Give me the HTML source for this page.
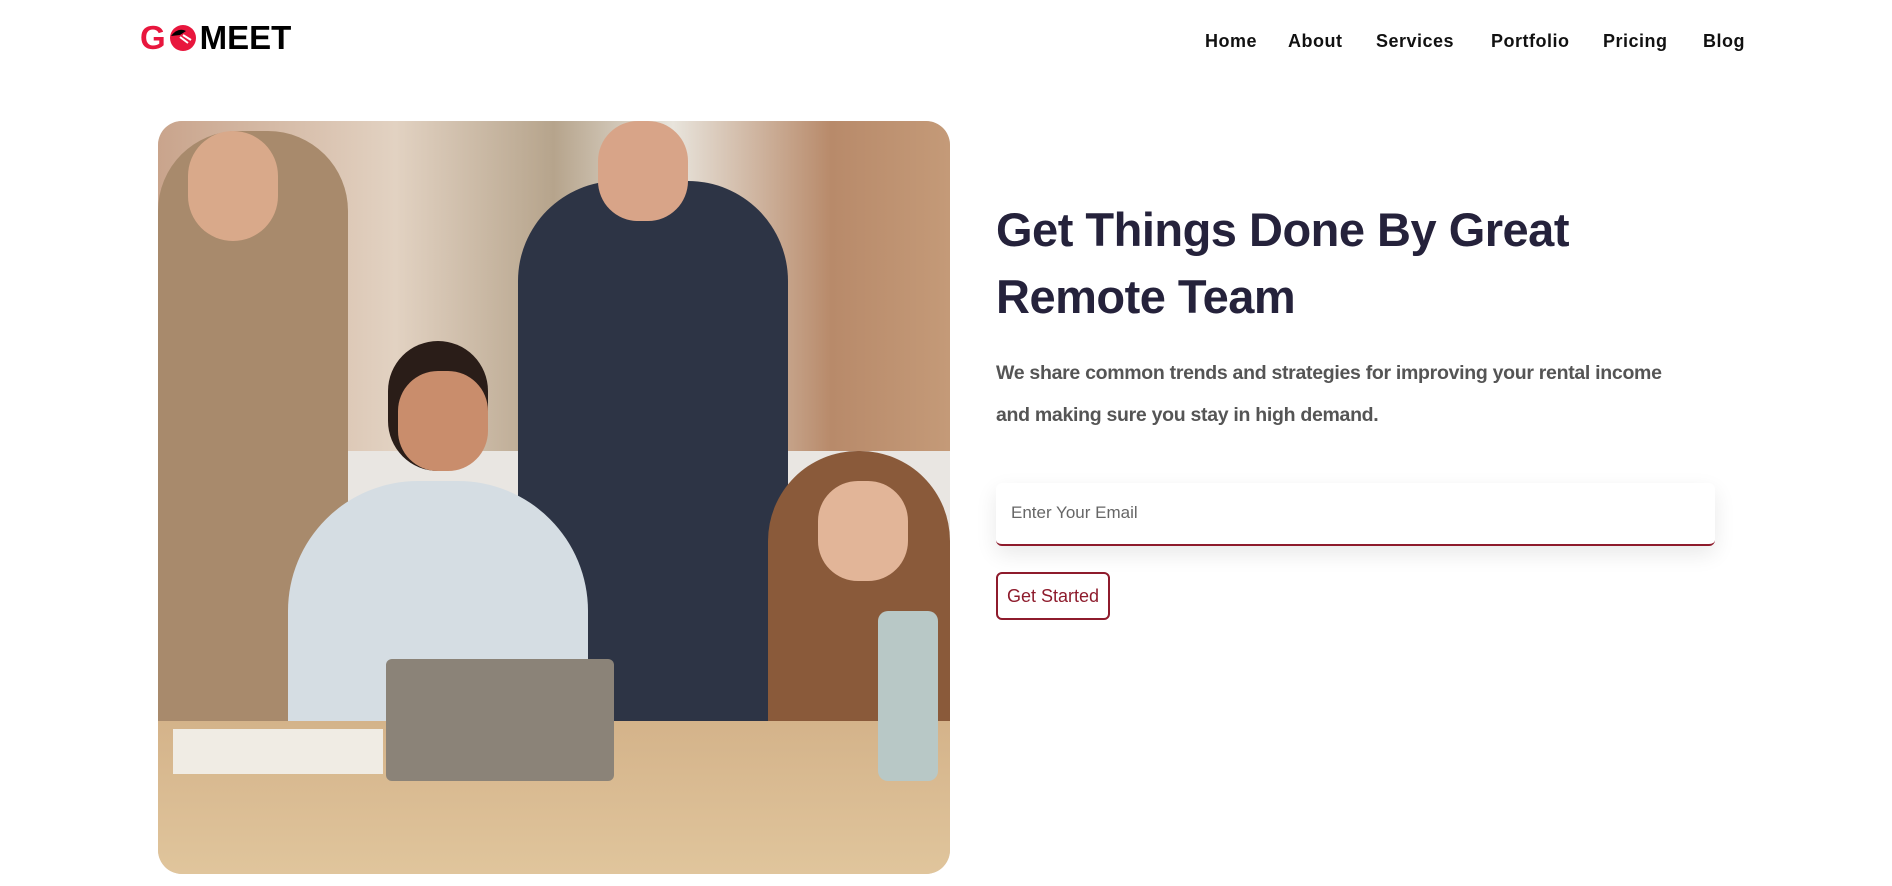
<!DOCTYPE html>
<html><head><meta charset="utf-8"><style>
*{margin:0;padding:0;box-sizing:border-box}
body{width:1892px;height:886px;background:#fff;position:relative;overflow:hidden;font-family:"Liberation Sans",sans-serif}
.logo{position:absolute;left:140px;top:23px;height:30px;display:flex;align-items:center;font-weight:900;font-size:33px;letter-spacing:0px;color:#000}
.nav a{position:absolute;top:31px;font-size:18px;font-weight:bold;color:#111;text-decoration:none;letter-spacing:0.5px}
.img{position:absolute;left:158px;top:121px;width:792px;height:753px;border-radius:24px;overflow:hidden;background:#d8c9b8}
.img div{position:absolute}
h1{position:absolute;left:996px;top:196px;font-size:47px;line-height:67px;color:#25223b;font-weight:bold;letter-spacing:-0.5px;width:720px}
p{position:absolute;left:996px;top:352px;font-size:19.5px;line-height:42px;color:#555;font-weight:bold;width:688px;letter-spacing:-0.3px}
.inp{position:absolute;left:996px;top:483px;width:719px;height:63px;background:#fff;border-radius:6px;border-bottom:2px solid #8e1b2c;box-shadow:0 8px 22px rgba(0,0,0,0.09);font-size:17px;color:#666;padding:20px 15px}
.btn{position:absolute;left:996px;top:572px;width:114px;height:48px;border:2px solid #8e1b2c;border-radius:6px;color:#8e1b2c;font-size:18px;display:flex;align-items:center;justify-content:center}
</style></head><body>
<div class="logo"><span style="color:#e8163d">G</span><svg width="32" height="30" viewBox="0 0 30 30" style="margin:0 1px"><circle cx="15" cy="15" r="13" fill="#e8163d"/><path d="M3 13 Q10 4 18 8 L12 12 Z" fill="#000"/><path d="M12 14 L20 20 M15 12 L23 17" stroke="#fff" stroke-width="2"/></svg><span>MEET</span></div>
<div class="nav"><a style="left:1205px">Home</a><a style="left:1288px">About</a><a style="left:1376px">Services</a><a style="left:1491px">Portfolio</a><a style="left:1603px">Pricing</a><a style="left:1703px">Blog</a></div>
<div class="img">
<div style="left:0;top:0;width:792px;height:340px;background:linear-gradient(90deg,#c9a48c,#e2d2c2 30%,#b6a48c 50%,#e8e4dc 65%,#b88a6a 85%,#c49a78)"></div>
<div style="left:0;top:330px;width:792px;height:120px;background:#e9e6e2"></div>
<div style="left:0;top:10px;width:190px;height:600px;background:#a88a6c;border-radius:80px 80px 0 0"></div>
<div style="left:30px;top:10px;width:90px;height:110px;background:#d9a98a;border-radius:45px"></div>
<div style="left:360px;top:60px;width:270px;height:540px;background:#2d3445;border-radius:100px 100px 0 0"></div>
<div style="left:440px;top:0;width:90px;height:100px;background:#d8a488;border-radius:40px"></div>
<div style="left:130px;top:360px;width:300px;height:300px;background:#d5dde3;border-radius:130px 130px 0 0"></div>
<div style="left:230px;top:220px;width:100px;height:130px;background:#2a1d18;border-radius:50px"></div>
<div style="left:240px;top:250px;width:90px;height:100px;background:#c98d6c;border-radius:40px"></div>
<div style="left:610px;top:330px;width:182px;height:330px;background:#8a5a3a;border-radius:90px 90px 0 0"></div>
<div style="left:660px;top:360px;width:90px;height:100px;background:#e2b598;border-radius:40px"></div>
<div style="left:0;top:600px;width:792px;height:153px;background:linear-gradient(180deg,#d4b38a,#e0c59c)"></div>
<div style="left:228px;top:538px;width:228px;height:122px;background:#8b8378;border-radius:6px"></div>
<div style="left:15px;top:608px;width:210px;height:45px;background:#f0ece4"></div>
<div style="left:720px;top:490px;width:60px;height:170px;background:#b8c8c6;border-radius:10px"></div>
</div>
<h1>Get Things Done By Great Remote Team</h1>
<p>We share common trends and strategies for improving your rental income and making sure you stay in high demand.</p>
<div class="inp">Enter Your Email</div>
<div class="btn">Get Started</div>
</body></html>
